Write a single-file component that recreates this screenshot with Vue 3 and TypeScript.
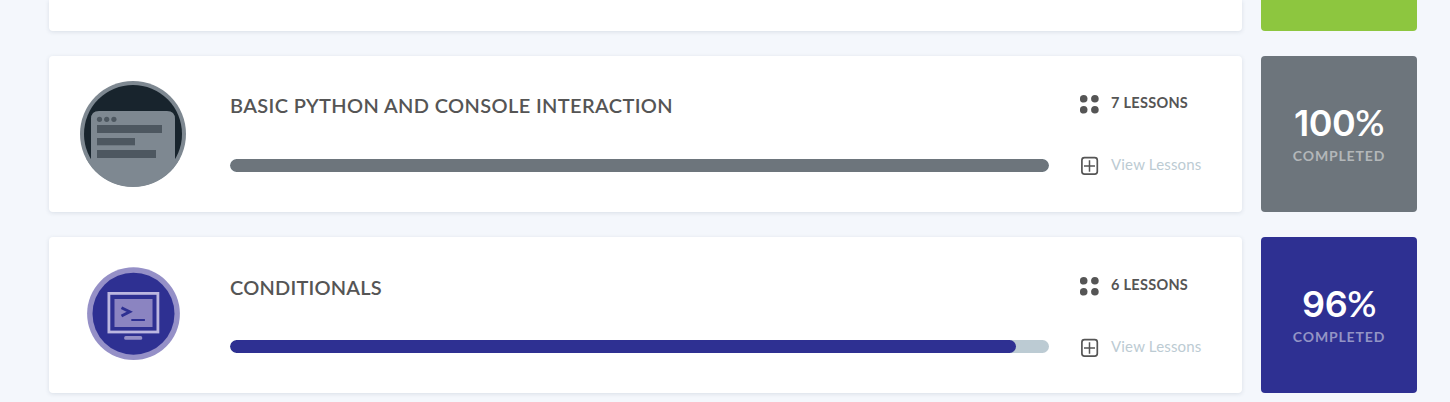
<script setup lang="ts">
interface Course {
  id: string
  title: string
  lessons: number
  percent: number
  color: string
  labelColor: string
  icon: 'window' | 'terminal'
}

const courses: Course[] = [
  {
    id: 'basics',
    title: 'Basic Python and Console Interaction',
    lessons: 7,
    percent: 100,
    color: '#6d757c',
    labelColor: '#b3b7b9',
    icon: 'window',
  },
  {
    id: 'conditionals',
    title: 'Conditionals',
    lessons: 6,
    percent: 96,
    color: '#2e3092',
    labelColor: '#9394c5',
    icon: 'terminal',
  },
]
</script>

<template>
  <main class="page">
    <section class="row row-cut">
      <div class="card"></div>
      <div class="score score-green"></div>
    </section>

    <section v-for="course in courses" :key="course.id" class="row" :class="course.id">
      <article class="card">
        <div class="badge">
          <svg v-if="course.icon === 'window'" width="106" height="106" viewBox="0 0 106 106">
            <defs>
              <clipPath id="disc"><circle cx="53" cy="53" r="52.8" /></clipPath>
            </defs>
            <circle cx="53" cy="53" r="53" fill="#7e8891" />
            <circle cx="53" cy="53" r="49" fill="#18242d" />
            <g clip-path="url(#disc)">
              <path d="M0 78H11V38Q11 30 19 30H87Q95 30 95 38V78H106V106H0Z" fill="#7e8891" />
            </g>
            <g fill="#4d5760">
              <circle cx="19.5" cy="38.3" r="2.6" />
              <circle cx="26.7" cy="38.3" r="2.6" />
              <circle cx="33.9" cy="38.3" r="2.6" />
              <rect x="17" y="44" width="65" height="8" />
              <rect x="17" y="57" width="38" height="7.3" />
              <rect x="17" y="69" width="59" height="8" />
            </g>
          </svg>
          <svg v-else width="94" height="94" viewBox="0 0 94 94">
            <circle cx="46.5" cy="46.7" r="46.4" fill="#9590c7" />
            <circle cx="46.5" cy="46.7" r="41" fill="#2e3092" />
            <rect x="21.9" y="26.4" width="49" height="38.6" fill="none" stroke="#bcb7e0" stroke-width="2.8" />
            <rect x="27.5" y="32" width="38" height="28" fill="#8b84c1" />
            <path d="M34.5 40.7L42.7 44.8L34.5 49" fill="none" stroke="#2e3092" stroke-width="2.9" />
            <path d="M44.3 53H57.9" stroke="#2e3092" stroke-width="2" />
            <rect x="37.2" y="69" width="18" height="3.8" rx="1.5" fill="#9590c7" />
          </svg>
        </div>

        <div class="body">
          <h2 class="title">{{ course.title }}</h2>
          <div class="track">
            <div class="fill" :style="{ width: course.percent + '%', background: course.color }"></div>
          </div>
        </div>

        <div class="meta">
          <div class="count">
            <svg width="20" height="20" viewBox="0 0 20 20" fill="#555">
              <circle cx="3.7" cy="3.8" r="3.8" />
              <circle cx="14.9" cy="3.8" r="3.8" />
              <circle cx="3.7" cy="14.8" r="3.8" />
              <circle cx="14.9" cy="14.8" r="3.8" />
            </svg>
            <span>{{ course.lessons }} LESSONS</span>
          </div>
          <a class="view">
            <svg width="20" height="20" viewBox="0 0 20 20" fill="none" stroke="#555">
              <rect x="1.9" y="1.7" width="15.4" height="16.4" rx="2.6" stroke-width="1.7" />
              <path d="M9.5 4.3V15.7M4 10H15" stroke-width="1.5" />
            </svg>
            <span>View Lessons</span>
          </a>
        </div>
      </article>

      <aside class="score" :style="{ background: course.color }">
        <strong class="percent">{{ course.percent }}<span class="sign">%</span></strong>
        <span class="label" :style="{ color: course.labelColor }">COMPLETED</span>
      </aside>
    </section>
  </main>
</template>

<style>
html,
body {
  margin: 0;
  overflow: hidden;
  background: #f4f7fc;
}
</style>

<style scoped>
.page {
  box-sizing: border-box;
  width: 1450px;
  height: 402px;
  padding-left: 49px;
  overflow: hidden;
  display: flex;
  flex-direction: column;
  gap: 25px;
  background: #f4f7fc;
  font-family: Lato, "Liberation Sans", sans-serif;
  color: #555;
}

.row {
  flex: none;
  display: grid;
  grid-template-columns: 1193px 156px;
  column-gap: 19px;
  height: 156px;
}

.row-cut {
  height: 31px;
}

.card {
  display: flex;
  background: #fff;
  border-radius: 4px;
  box-shadow: 0 1px 4px rgba(60, 80, 100, 0.14);
}

.row-cut .card,
.row-cut .score {
  border-top-left-radius: 0;
  border-top-right-radius: 0;
}

.badge {
  width: 168px;
  margin-right: 13px;
  display: flex;
  align-items: center;
  justify-content: center;
}

.badge svg {
  display: block;
}

.conditionals .badge {
  width: 170px;
  margin-right: 11px;
  padding-bottom: 2px;
}

.body {
  width: 819px;
}

.title {
  margin: 37px 0 0;
  height: 24px;
  line-height: 24px;
  font-size: 20px;
  font-weight: 600;
  letter-spacing: 0.37px;
  text-transform: uppercase;
  white-space: nowrap;
}

.track {
  margin-top: 42px;
  height: 13px;
  border-radius: 7px;
  background: #bccbd3;
  overflow: hidden;
}

.fill {
  height: 100%;
  border-radius: 7px;
}

.meta {
  margin-left: 31px;
  padding-top: 39px;
}

.count,
.view {
  display: flex;
  gap: 11px;
  height: 20px;
  line-height: 16px;
  white-space: nowrap;
}

.count {
  font-size: 14.5px;
  font-weight: 700;
  letter-spacing: 0.28px;
}

.view {
  margin-top: 41px;
  font-size: 15px;
  letter-spacing: 0.18px;
  color: #bccbd3;
}

.conditionals .title {
  margin-top: 38px;
  letter-spacing: 0.2px;
}

.conditionals .track {
  margin-top: 41px;
}

.conditionals .meta {
  padding-top: 40px;
}

.score {
  display: flex;
  flex-direction: column;
  align-items: center;
  border-radius: 4px;
}

.score-green {
  background: #8dc63f;
}

.percent {
  margin-top: 44px;
  height: 44px;
  line-height: 44px;
  font-family: Inter, "Liberation Sans", sans-serif;
  font-size: 36px;
  font-weight: 600;
  letter-spacing: -0.5px;
  color: #fff;
}

.sign {
  font-family: Lato, "Liberation Sans", sans-serif;
  font-weight: 600;
  letter-spacing: -0.5px;
}

.label {
  margin-top: 4px;
  line-height: 16px;
  font-size: 14px;
  font-weight: 700;
  letter-spacing: 0.85px;
}
</style>
